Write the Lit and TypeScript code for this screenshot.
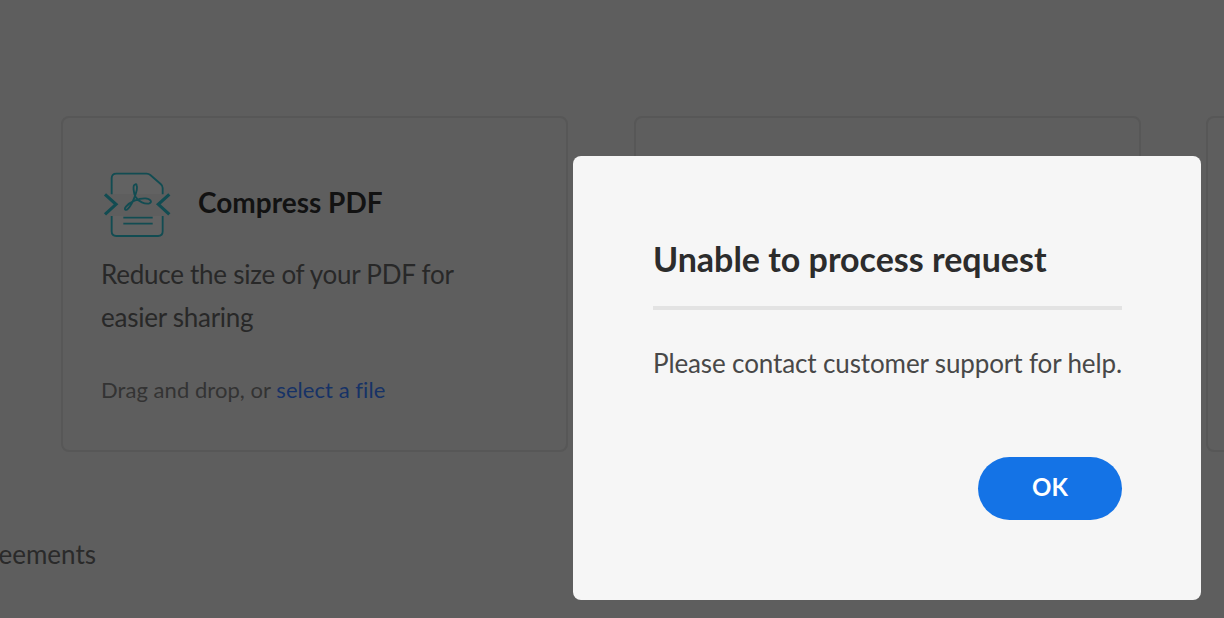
import { LitElement, html, css, svg } from 'lit';
import { customElement } from 'lit/decorators.js';

const compressIcon = svg`
  <path d="M65 100V52Q65 38 79 38H170Q176 38 181 42L212 69Q218 74 218 81V100M218 165V211Q218 225 204 225H79Q65 225 65 211V165" fill="#626262" stroke="#124c52" stroke-width="5.5"/>
  <path d="M45 100L78 130L45 160M238 100L205 130L238 160" fill="none" stroke="#124c52" stroke-width="9.5"/>
  <path d="M100 170H188M100 188H188" fill="none" stroke="#124c52" stroke-width="5.5"/>
  <path d="M135 71C128 72 130 95 137 108C145 122 165 130 178 127C188 124 182 112 165 112C145 112 120 122 108 137C100 147 108 150 115 142C128 128 145 85 140 73C139 69 137 69 135 71Z" fill="none" stroke="#124c52" stroke-width="5.5"/>
`;

@customElement('app-root')
export class AppRoot extends LitElement {
  static styles = css`
    :host {
      display: block;
      position: relative;
      width: 1224px;
      height: 618px;
      overflow: hidden;
      background: #5e5e5e;
      font-family: 'Lato', 'Noto Sans', sans-serif;
    }

    .cards {
      display: flex;
      gap: 65.5px;
      padding: 116px 0 0 61px;
      width: 1400px;
    }

    .card {
      flex: none;
      width: 507px;
      height: 336px;
      box-sizing: border-box;
      border: 2px solid #575757;
      border-radius: 8px;
      padding: 54px 38px 0;
    }

    .card-head {
      display: flex;
      align-items: center;
      gap: 26px;
      padding-left: 1px;
    }

    .card-head svg {
      display: block;
      width: 70px;
      height: 66px;
    }

    .card-head h3 {
      margin: 0 0 6px;
      font-size: 28px;
      font-weight: 700;
      color: #121212;
    }

    .card p {
      max-width: 380px;
      margin: 15px 0 0;
      font-size: 26px;
      line-height: 43px;
      letter-spacing: -0.25px;
      color: #282828;
    }

    .drop {
      margin-top: 35px;
      font-size: 22px;
      line-height: 32px;
      letter-spacing: 0.05px;
      color: #333;
    }

    .drop a {
      color: #163266;
    }

    .clipped {
      display: flex;
      justify-content: flex-end;
      width: 96px;
      margin-top: 86px;
      overflow: hidden;
      font-size: 26px;
      line-height: 32px;
      color: #2a2a2a;
    }

    .dialog {
      position: absolute;
      left: 573px;
      top: 156px;
      width: 628px;
      height: 444px;
      box-sizing: border-box;
      padding: 79px 79px 0 80px;
      background: #f6f6f6;
      border-radius: 8px;
    }

    .dialog h2 {
      margin: 0;
      font-size: 34px;
      line-height: 48px;
      font-weight: 700;
      color: #2c2c2c;
      padding-bottom: 23px;
      border-bottom: 4px solid #e3e3e3;
    }

    .dialog p {
      margin: 34px 0 0;
      font-size: 26px;
      line-height: 38px;
      letter-spacing: -0.12px;
      white-space: nowrap;
      color: #484848;
    }

    .actions {
      display: flex;
      justify-content: flex-end;
      margin-top: 75px;
    }

    .ok {
      width: 144px;
      height: 63px;
      padding: 0 0 4px;
      border: none;
      border-radius: 32px;
      background: #1473e6;
      color: #fff;
      font: 700 24px 'Lato', 'Noto Sans', sans-serif;
    }
  `;

  render() {
    return html`
      <div class="cards">
        <div class="card">
          <div class="card-head">
            <svg viewBox="36 33 210 198">${compressIcon}</svg>
            <h3>Compress PDF</h3>
          </div>
          <p>Reduce the size of your PDF for easier sharing</p>
          <div class="drop">Drag and drop, or <a>select a file</a></div>
        </div>
        <div class="card"></div>
        <div class="card"></div>
      </div>
      <div class="clipped"><span>Agreements</span></div>
      <div class="dialog">
        <h2>Unable to process request</h2>
        <p>Please contact customer support for help.</p>
        <div class="actions"><button class="ok">OK</button></div>
      </div>
    `;
  }
}
